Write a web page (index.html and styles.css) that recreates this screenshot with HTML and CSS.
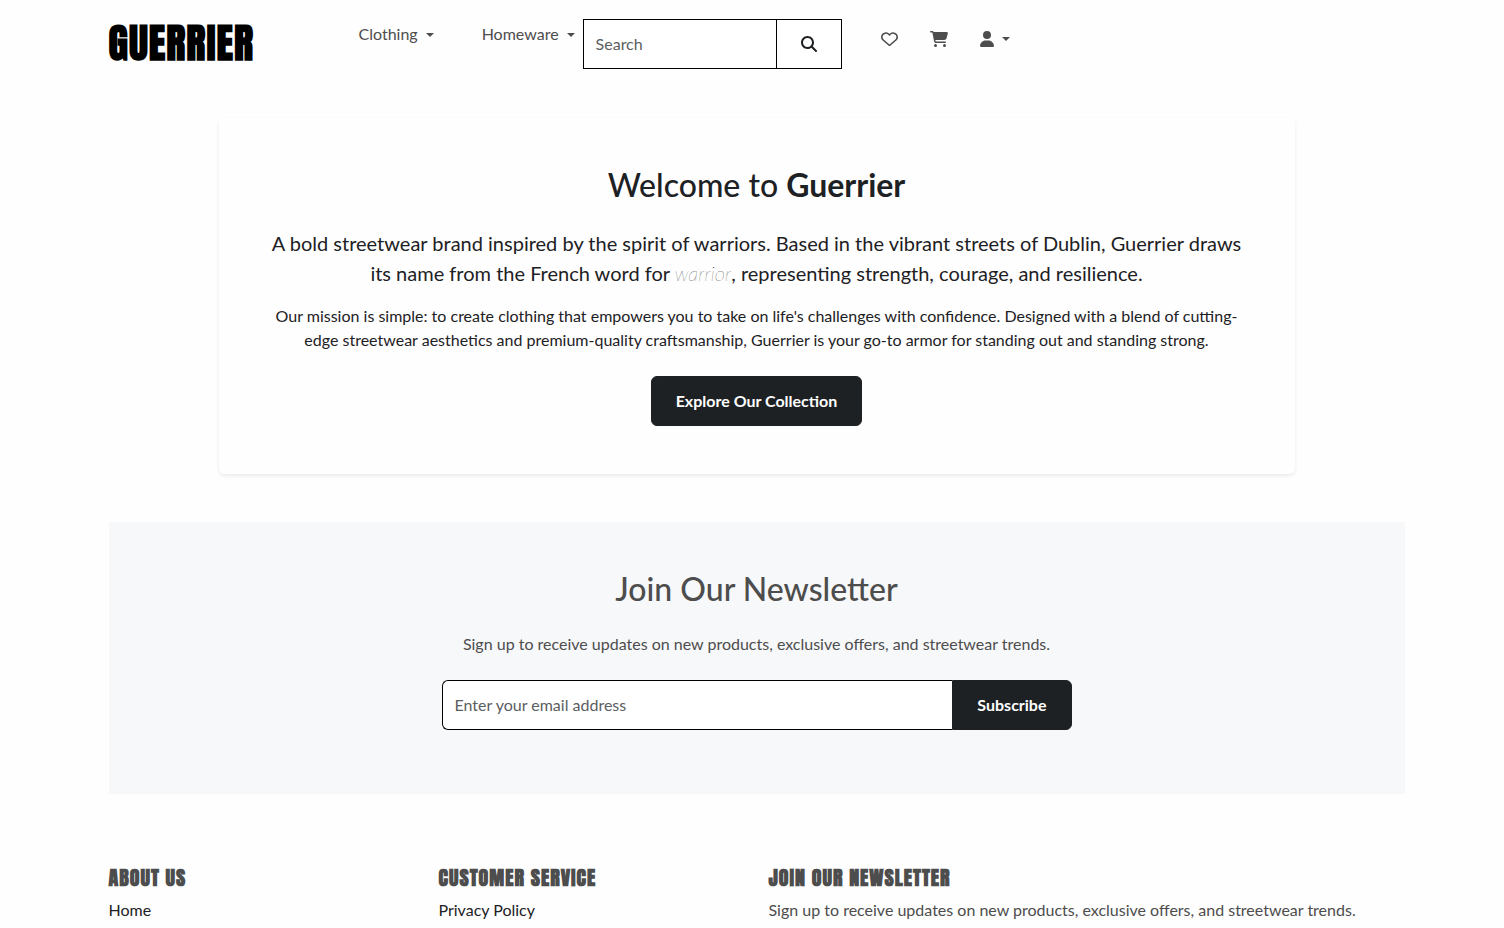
FILE: index.html
```html
<!DOCTYPE html>
<html lang="en">
<head>
<meta charset="utf-8">
<meta name="viewport" content="width=device-width, initial-scale=1">
<title>Guerrier</title>
<link rel="stylesheet" href="styles.css">
</head>
<body>
<header class="container header">
  <a class="brand" href="#">GUERRIER</a>
  <nav class="menu" aria-label="Categories">
    <button class="menu-item" type="button">Clothing<span class="caret"></span></button>
    <button class="menu-item" type="button">Homeware<span class="caret"></span></button>
  </nav>
  <form class="search">
    <input class="search-input" type="search" placeholder="Search" aria-label="Search">
    <button class="search-button" type="submit" aria-label="Search">
      <svg width="16" height="16" viewBox="0 0 512 512" fill="currentColor"><path d="M416 208c0 45.900-14.900 88.300-40 122.700L502.600 457.400c12.500 12.500 12.500 32.800 0 45.300s-32.800 12.500-45.300 0L330.700 376c-34.400 25.200-76.800 40-122.700 40C93.100 416 0 322.900 0 208S93.100 0 208 0S416 93.100 416 208zM208 352a144 144 0 1 0 0-288 144 144 0 1 0 0 288z"/></svg>
    </button>
  </form>
  <nav class="actions" aria-label="Account">
    <a class="action" href="#" aria-label="Wishlist"><svg width="17" height="16" viewBox="0 0 512 512" fill="currentColor" preserveAspectRatio="none"><path d="M225.800 468.200l-2.500-2.300L48.100 303.200C17.400 274.700 0 234.700 0 192.800v-3.300c0-70.400 50-130.800 119.200-144C158.600 37.900 198.900 47 231 69.600c9 6.400 17.400 13.800 25 22.300c4.200-4.800 8.700-9.200 13.500-13.300c3.700-3.200 7.500-6.200 11.500-9c32.100-22.600 72.400-31.700 111.800-24.200C462 58.600 512 119.100 512 189.500v3.300c0 41.900-17.400 81.900-48.100 110.400L288.700 465.900l-2.500 2.300c-8.200 7.600-19 11.900-30.200 11.900s-22-4.200-30.200-11.900zM239.100 145c-.4-.3-.7-.7-1-1.100l-17.800-20c-23.100-25.900-58-37.700-92-31.200C81.600 101.500 48 142.100 48 189.500v3.300c0 28.500 11.900 55.800 32.800 75.200L256 430.700 431.200 268c20.900-19.400 32.800-46.700 32.800-75.200v-3.300c0-47.300-33.600-88-80.100-96.900c-34-6.500-69 5.400-92 31.200l-17.900 20.100c-4.500 5-11.100 7.900-17.900 7.900s-13.300-2.800-17-6.800z"/></svg></a>
    <a class="action" href="#" aria-label="Cart"><svg width="18" height="16" viewBox="0 0 576 512" fill="currentColor"><path d="M0 24C0 10.700 10.700 0 24 0h45.500c22 0 41.500 12.800 50.600 32h411c26.300 0 45.500 25 38.600 50.400l-41 152.300c-8.500 31.400-37 53.300-69.500 53.300H170.700l5.400 28.500c2.200 11.300 12.100 19.500 23.600 19.500H488c13.300 0 24 10.700 24 24s-10.700 24-24 24H199.700c-34.600 0-64.300-24.600-70.700-58.500L77.400 54.500C76.700 50.700 73.400 48 69.500 48H24C10.700 48 0 37.300 0 24zM128 464a48 48 0 1 1 96 0 48 48 0 1 1-96 0zm336-48a48 48 0 1 1 0 96 48 48 0 1 1 0-96z"/></svg></a>
    <button class="action" type="button" aria-label="Account"><svg width="14" height="16" viewBox="0 0 448 512" fill="currentColor"><path d="M224 256a128 128 0 1 0 0-256 128 128 0 1 0 0 256zm-45.700 48C79.800 304 0 383.800 0 482.300C0 498.700 13.300 512 29.700 512h388.600c16.400 0 29.700-13.300 29.700-29.700C448 383.800 368.200 304 269.700 304h-91.400z"/></svg><span class="caret"></span></button>
  </nav>
</header>
<main class="container">
  <section class="welcome">
    <h1 class="title">Welcome to <strong>Guerrier</strong></h1>
    <p class="lead">A bold streetwear brand inspired by the spirit of warriors. Based in the vibrant streets of Dublin, Guerrier draws its name from the French word for <em>warrior</em>, representing strength, courage, and resilience.</p>
    <p class="mission">Our mission is simple: to create clothing that empowers you to take on life's challenges with confidence. Designed with a blend of cutting-edge streetwear aesthetics and premium-quality craftsmanship, Guerrier is your go-to armor for standing out and standing strong.</p>
    <a class="button" href="#">Explore Our Collection</a>
  </section>
  <section class="newsletter">
    <h2 class="title">Join Our Newsletter</h2>
    <p class="newsletter-text">Sign up to receive updates on new products, exclusive offers, and streetwear trends.</p>
    <form class="subscribe">
      <input class="email" type="email" placeholder="Enter your email address" aria-label="Email address">
      <button class="button subscribe-button" type="submit">Subscribe</button>
    </form>
  </section>
</main>
<footer class="container footer">
  <section>
    <h2 class="footer-title">ABOUT US</h2>
    <a class="footer-link" href="#">Home</a>
  </section>
  <section>
    <h2 class="footer-title">CUSTOMER SERVICE</h2>
    <a class="footer-link" href="#">Privacy Policy</a>
  </section>
  <section class="footer-wide">
    <h2 class="footer-title">JOIN OUR NEWSLETTER</h2>
    <p class="footer-text">Sign up to receive updates on new products, exclusive offers, and streetwear trends.</p>
  </section>
</footer>
</body>
</html>
```
FILE: styles.css
```css
* { box-sizing: border-box; }

body {
  margin: 0;
  padding-left: 9px;
  background: #fefefe;
  color: #1d2124;
  font: 400 16px/24px Lato, "Liberation Sans", sans-serif;
}

h1, h2, p { margin: 0; }
a { color: inherit; text-decoration: none; }
button, input { font: inherit; color: inherit; }
button { cursor: pointer; }

.container {
  max-width: 1320px;
  margin: 0 auto;
  padding: 0 12px;
}

.header {
  display: flex;
  align-items: flex-start;
  height: 118px;
  padding-top: 19px;
  color: #4d4d4d;
}

.brand {
  flex: 0 0 242px;
  color: #000;
  font: 700 40px/48px Anton, "Liberation Sans Narrow", "Liberation Sans", sans-serif;
  letter-spacing: 1px;
}

.menu { display: flex; gap: 32px; }

.menu-item {
  padding: 3px 8px;
  border: 0;
  background: none;
}

.caret {
  display: inline-block;
  margin-left: 8px;
  vertical-align: 3px;
  border: 4px solid transparent;
  border-top-color: currentColor;
  border-bottom: 0;
}

.search {
  display: flex;
  width: 259px;
  height: 50px;
  color: #1d2124;
}

.search-input {
  flex: 1;
  min-width: 0;
  padding: 0 12px;
  border: 1px solid #000;
  border-radius: 0;
  background: #fff;
  appearance: none;
}

.search-button {
  display: grid;
  place-items: center;
  width: 65px;
  border: 1px solid #000;
  border-left: 0;
  background: #fff;
}

input::placeholder { color: #5b5e61; opacity: 1; }

.actions {
  display: flex;
  gap: 16px;
  padding: 8px 0 0 31px;
}

.action {
  display: flex;
  align-items: center;
  height: 24px;
  padding: 0 8px;
  border: 0;
  background: none;
}

.welcome {
  max-width: 1076px;
  margin: 0 auto 48px;
  padding: 48px;
  border-radius: 6px;
  text-align: center;
  box-shadow: 0 2px 4px rgba(0, 0, 0, .08);
}

.title {
  margin-bottom: 24px;
  font-size: 32px;
  font-weight: 500;
  line-height: 38px;
}

.title strong { font-weight: 700; }

.lead {
  margin-bottom: 16px;
  font-size: 20px;
  line-height: 30px;
}

.lead em {
  color: #000;
  font-weight: 200;
}

.mission { margin-bottom: 24px; }

.button {
  display: inline-block;
  padding: 12px 24px;
  border: 1px solid #1d2124;
  border-radius: 6px;
  background: #1d2124;
  color: #fff;
  font-weight: 700;
  vertical-align: top;
}

.newsletter {
  padding: 48px 48px 64px;
  background: #f7f8fa;
  color: #4d4d4d;
  text-align: center;
}

.newsletter-text { margin-bottom: 24px; }

.subscribe {
  display: flex;
  max-width: 630px;
  margin: 0 auto;
}

.email {
  flex: 1;
  min-width: 0;
  padding: 0 12px;
  border: 1px solid #000;
  border-right: 0;
  border-radius: 6px 0 0 6px;
  background: #fff;
}

.subscribe-button { border-radius: 0 6px 6px 0; }

.footer {
  display: grid;
  grid-template-columns: repeat(4, 1fr);
  gap: 24px;
  padding-top: 72px;
  color: #4d4d4d;
}

.footer-wide { grid-column: span 2; }

.footer-title {
  margin-bottom: 8px;
  font: 700 20px/24px Anton, "Liberation Sans Narrow", "Liberation Sans", sans-serif;
  letter-spacing: 1px;
}

.footer-link { color: #1d2124; }
```
